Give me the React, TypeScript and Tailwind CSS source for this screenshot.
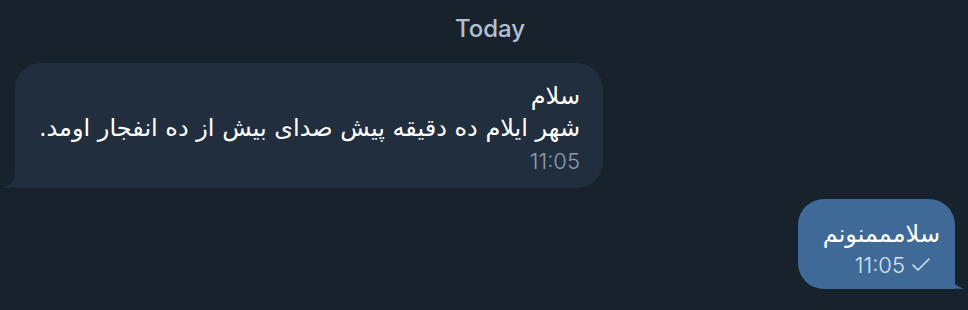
import { Check } from "lucide-react";

const fa = { fontFamily: '"DejaVu Sans", "Noto Sans", sans-serif' };

function IncomingTail() {
    return (
        <svg
            className="absolute left-[-13px] bottom-0"
            width="30"
            height="22"
            viewBox="0 0 30 22"
        >
            <path d="M13 0 L13 8 C13 14 9 19 0 21.5 C8 22.5 16 21 22 18 C24 19.5 27 21 30 22 L30 0 Z" fill="#212e3e" />
        </svg>
    );
}

function OutgoingTail() {
    return (
        <svg
            className="absolute right-[-9px] bottom-0"
            width="30"
            height="22"
            viewBox="0 0 30 22"
        >
            <path d="M17 0 L17 8 C17 14 21 19 30 21.5 C22 22.5 14 21 8 18 C6 19.5 3 21 0 22 L0 0 Z" fill="#3f6a98" />
        </svg>
    );
}

export default function App() {
    return (
        <div className="w-[968px] h-[310px] bg-[#18222d] overflow-hidden flex flex-col">
            <div className="flex justify-center pt-[13px] pl-[12px]">
                <span
                    className="text-[24px] leading-[32px] font-medium text-[#b2c0d2]"
                    style={{ fontFamily: "Inter, sans-serif" }}
                >
                    Today
                </span>
            </div>

            <div className="flex pl-[15px] mt-[18px]">
                <div className="relative w-[588px] h-[125px] bg-[#212e3e] rounded-[26px] rounded-bl-none pr-[23px] pt-[17px]">
                    <IncomingTail />
                    <div dir="rtl" className="text-white text-[24px] leading-[32px]" style={fa}>
                        <div>سلام</div>
                        <div>شهر ایلام ده دقیقه پیش صدای بیش از ده انفجار اومد.</div>
                    </div>
                    <div
                        className="text-right mt-[2px] text-[22px] leading-[30px] font-light text-[#8d9db2]"
                        style={{ fontFamily: "Inter, sans-serif" }}
                    >
                        11:05
                    </div>
                </div>
            </div>

            <div className="flex justify-end pr-[13px] mt-[11px]">
                <div className="relative w-[157px] h-[90px] bg-[#3f6a98] rounded-[26px] rounded-br-none pr-[15px] pt-[19px] flex flex-col items-end">
                    <OutgoingTail />
                    <div dir="rtl" className="text-white text-[24px] leading-[32px]" style={fa}>
                        سلامممنونم
                    </div>
                    <div
                        className="flex items-center gap-[4px] pr-[7px] mt-[1px] text-[22px] leading-[28px] font-light text-[#d7e4f2]"
                        style={{ fontFamily: "Inter, sans-serif" }}
                    >
                        <span>11:05</span>
                        <Check size={24} strokeWidth={1.5} />
                    </div>
                </div>
            </div>
        </div>
    );
}
